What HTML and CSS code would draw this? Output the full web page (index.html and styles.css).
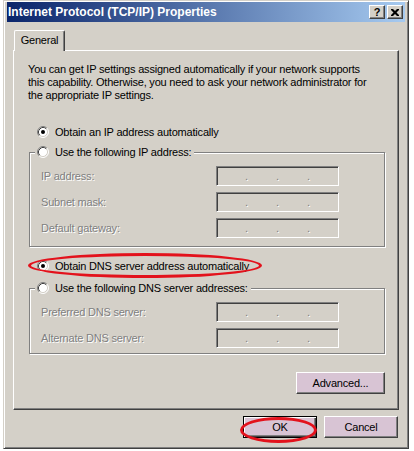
FILE: index.html
```html
<!DOCTYPE html>
<html>
<head>
<meta charset="utf-8">
<title>Internet Protocol (TCP/IP) Properties</title>
<link rel="stylesheet" href="styles.css">
</head>
<body>
<div class="window">
  <div class="titlebar">
    <span class="title">Internet Protocol (TCP/IP) Properties</span>
    <div class="tbtns">
      <span class="tbtn help">?</span>
      <span class="tbtn close"><svg width="8" height="7" viewBox="0 0 8 7"><path d="M0 0h2l2 2 2-2h2v1L5.5 3.5 8 6v1H6L4 5 2 7H0V6l2.5-2.5L0 1z" fill="#000"/></svg></span>
    </div>
  </div>

  <div class="tabs"><div class="tab">General</div></div>

  <div class="panel">
    <p class="intro">You can get IP settings assigned automatically if your network supports<br>this capability. Otherwise, you need to ask your network administrator for<br>the appropriate IP settings.</p>

    <div class="radio-row first">
      <svg class="radio" width="12" height="12" viewBox="0 0 12 12"><circle cx="6" cy="6" r="5" fill="#fff"/><path d="M2.11 9.89A5.5 5.5 0 0 1 9.89 2.11" stroke="#808080" fill="none"/><path d="M9.89 2.11A5.5 5.5 0 0 1 2.11 9.89" stroke="#fff" fill="none"/><path d="M2.82 9.18A4.5 4.5 0 0 1 9.18 2.82" stroke="#404040" fill="none"/><path d="M9.18 2.82A4.5 4.5 0 0 1 2.82 9.18" stroke="#d4d0c8" fill="none"/><circle cx="6" cy="6" r="2" fill="#000"/></svg>
      <span>Obtain an IP address automatically</span>
    </div>

    <fieldset class="group ipgroup">
      <legend>
        <svg class="radio" width="12" height="12" viewBox="0 0 12 12"><circle cx="6" cy="6" r="5" fill="#fff"/><path d="M2.11 9.89A5.5 5.5 0 0 1 9.89 2.11" stroke="#808080" fill="none"/><path d="M9.89 2.11A5.5 5.5 0 0 1 2.11 9.89" stroke="#fff" fill="none"/><path d="M2.82 9.18A4.5 4.5 0 0 1 9.18 2.82" stroke="#404040" fill="none"/><path d="M9.18 2.82A4.5 4.5 0 0 1 2.82 9.18" stroke="#d4d0c8" fill="none"/></svg>
        <span>Use the following IP address:</span>
      </legend>
      <div class="fields">
        <span class="lbl">IP address:</span>
        <div class="ipbox"><i></i>.<i></i>.<i></i>.<i></i></div>
        <span class="lbl">Subnet mask:</span>
        <div class="ipbox"><i></i>.<i></i>.<i></i>.<i></i></div>
        <span class="lbl">Default gateway:</span>
        <div class="ipbox"><i></i>.<i></i>.<i></i>.<i></i></div>
      </div>
    </fieldset>

    <div class="radio-row dns-auto">
      <svg class="radio" width="12" height="12" viewBox="0 0 12 12"><circle cx="6" cy="6" r="5" fill="#fff"/><path d="M2.11 9.89A5.5 5.5 0 0 1 9.89 2.11" stroke="#808080" fill="none"/><path d="M9.89 2.11A5.5 5.5 0 0 1 2.11 9.89" stroke="#fff" fill="none"/><path d="M2.82 9.18A4.5 4.5 0 0 1 9.18 2.82" stroke="#404040" fill="none"/><path d="M9.18 2.82A4.5 4.5 0 0 1 2.82 9.18" stroke="#d4d0c8" fill="none"/><circle cx="6" cy="6" r="2" fill="#000"/></svg>
      <span>Obtain DNS server address automatically</span>
      <span class="ring ring-dns"></span>
    </div>

    <fieldset class="group dnsgroup">
      <legend>
        <svg class="radio" width="12" height="12" viewBox="0 0 12 12"><circle cx="6" cy="6" r="5" fill="#fff"/><path d="M2.11 9.89A5.5 5.5 0 0 1 9.89 2.11" stroke="#808080" fill="none"/><path d="M9.89 2.11A5.5 5.5 0 0 1 2.11 9.89" stroke="#fff" fill="none"/><path d="M2.82 9.18A4.5 4.5 0 0 1 9.18 2.82" stroke="#404040" fill="none"/><path d="M9.18 2.82A4.5 4.5 0 0 1 2.82 9.18" stroke="#d4d0c8" fill="none"/></svg>
        <span>Use the following DNS server addresses:</span>
      </legend>
      <div class="fields">
        <span class="lbl">Preferred DNS server:</span>
        <div class="ipbox"><i></i>.<i></i>.<i></i>.<i></i></div>
        <span class="lbl">Alternate DNS server:</span>
        <div class="ipbox"><i></i>.<i></i>.<i></i>.<i></i></div>
      </div>
    </fieldset>

    <div class="adv-row"><button class="btn adv">Advanced...</button></div>
  </div>

  <div class="footer">
    <button class="btn default">OK<span class="ring ring-ok"></span></button>
    <button class="btn">Cancel</button>
  </div>
</div>
</body>
</html>
```

FILE: styles.css
```css
* { box-sizing: border-box; }
html, body { margin: 0; padding: 0; }
body {
  width: 414px;
  height: 451px;
  overflow: hidden;
  background: #ffffff;
  font: 11px/13px "Liberation Sans", Arial, sans-serif;
  letter-spacing: -0.2px;
  color: #000;
}

.window {
  margin-left: 3px;
  width: 406px;
  height: 449px;
  background: #d4d0c8;
  border: 1px solid;
  border-color: #d4d0c8 #404040 #404040 #d4d0c8;
  box-shadow: inset 1px 1px #fff, inset -1px -1px #808080;
  padding: 1px 3px 3px 3px;
  display: flex;
  flex-direction: column;
}

.titlebar {
  height: 20px;
  flex: none;
  display: flex;
  align-items: center;
  justify-content: space-between;
  padding: 0 2px 0 1px;
  background: linear-gradient(to right, #0a246a, #a6caf0);
}
.title {
  color: #fff;
  font-weight: bold;
  font-size: 12px;
  letter-spacing: 0;
  white-space: nowrap;
}
.tbtns { display: flex; gap: 2px; }
.tbtn {
  width: 16px;
  height: 14px;
  background: #d4d0c8;
  border: 1px solid;
  border-color: #fff #404040 #404040 #fff;
  box-shadow: inset -1px -1px #808080;
  display: flex;
  align-items: center;
  justify-content: center;
  font-weight: bold;
  font-size: 11px;
  letter-spacing: 0;
  line-height: 12px;
}

.tabs {
  margin-top: 8px;
  display: flex;
  padding-left: 7px;
  flex: none;
}
.tab {
  position: relative;
  z-index: 1;
  width: 51px;
  height: 21px;
  margin-bottom: -1px;
  background: #d4d0c8;
  border-top: 1px solid #fff;
  border-left: 1px solid #fff;
  border-right: 1px solid #404040;
  box-shadow: inset -1px 0 #808080;
  border-radius: 2px 2px 0 0;
  padding-top: 3px;
  text-align: center;
}

.panel {
  flex: none;
  margin: 0 6px;
  height: 360px;
  border: 1px solid;
  border-color: #fff #404040 #404040 #fff;
  box-shadow: inset -1px -1px #808080;
  padding: 12px 13px 0 14px;
}

.intro {
  margin: 0;
  white-space: nowrap;
  line-height: 13px;
}

.radio-row {
  display: flex;
  align-items: center;
  gap: 6px;
  height: 16px;
  padding-left: 9px;
  white-space: nowrap;
}
.radio-row.first { margin-top: 22px; }
.radio-row.dns-auto { margin-top: 11px; position: relative; }
.radio { flex: none; display: block; }

.group {
  margin: 4px 0 0 1px;
  width: 356px;
  min-width: 0;
  border: 1px solid #808080;
  box-shadow: inset 1px 1px #fff, 1px 1px #fff;
  padding: 6px 0 8px 11px;
}
.dnsgroup { margin-top: 6px; padding-bottom: 5px; }
.group legend {
  margin-left: -6px;
  padding: 0 3px 0 2px;
  height: 16px;
  display: flex;
  align-items: center;
  gap: 6px;
  background: #d4d0c8;
  white-space: nowrap;
}

.fields {
  display: grid;
  grid-template-columns: 175px 123px;
  grid-auto-rows: 20px;
  row-gap: 6px;
  align-items: center;
}
.lbl {
  color: #808080;
  text-shadow: 1px 1px 0 #fff;
  white-space: nowrap;
}
.ipbox {
  height: 20px;
  border: 1px solid;
  border-color: #808080 #fff #fff #808080;
  box-shadow: inset 1px 1px #404040, inset -1px -1px #d4d0c8;
  display: flex;
  align-items: center;
  color: #808080;
  text-shadow: 1px 1px 0 #fff;
}
.ipbox i { flex: 1; }

.adv-row {
  margin-top: 18px;
  display: flex;
  justify-content: flex-end;
}

.btn {
  font: 11px/13px "Liberation Sans", Arial, sans-serif;
  letter-spacing: -0.2px;
  color: #000;
  width: 74px;
  height: 22px;
  padding: 0;
  background: #d8c4d4;
  border: 1px solid;
  border-color: #fff #404040 #404040 #fff;
  box-shadow: inset -1px -1px #808080;
  border-radius: 0;
}
.btn.adv { width: 89px; }
.btn.default {
  position: relative;
  border: 1px solid #000;
  box-shadow: inset 1px 1px #fff, inset -1px -1px #404040, inset -2px -2px #808080;
}

.footer {
  margin-top: 6px;
  display: flex;
  justify-content: flex-end;
  gap: 7px;
  padding-right: 7px;
}

.ring {
  position: absolute;
  border: 3px solid #e3121c;
  border-radius: 50%;
  pointer-events: none;
}
.ring-dns { left: 0; top: -5px; width: 234px; height: 25px; }
.ring-ok { left: -4px; top: 0; width: 77px; height: 26px; }
```
